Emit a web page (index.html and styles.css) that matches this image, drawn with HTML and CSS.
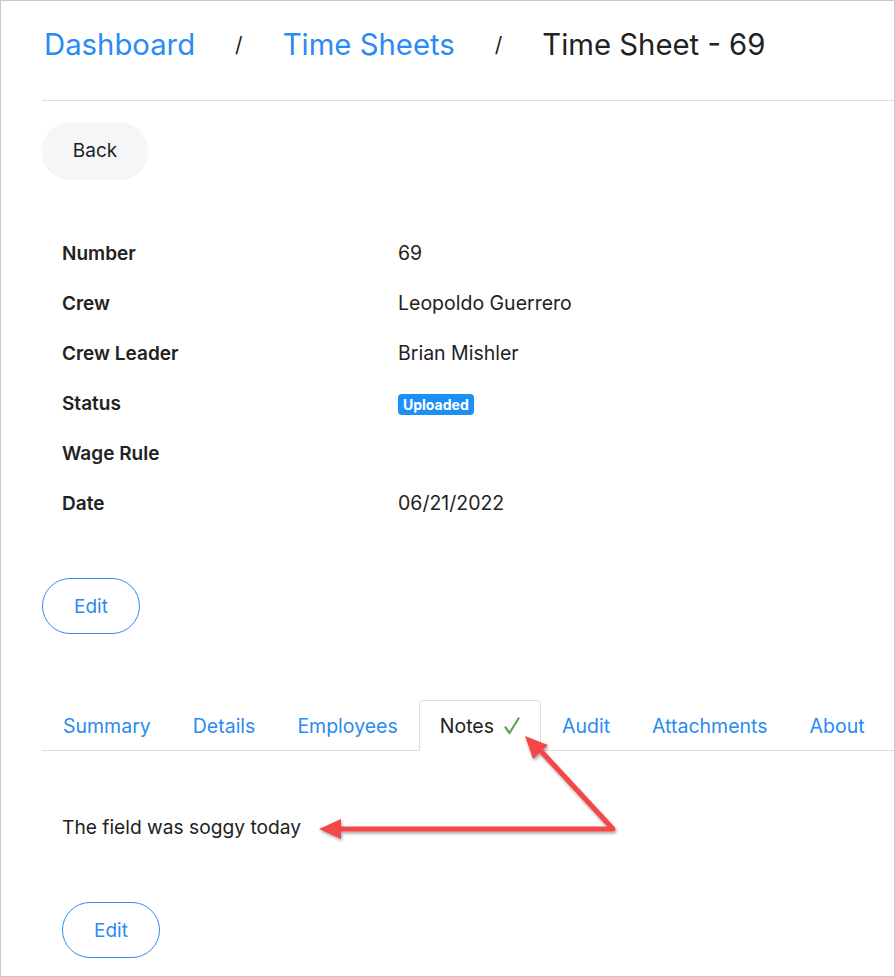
FILE: index.html
```html
<!doctype html>
<html>
<head>
<meta charset="utf-8">
<title>Time Sheet - 69</title>
<link rel="stylesheet" href="styles.css">
</head>
<body>
	<div class="page">
		<div class="crumbs">
			<a href="#">Dashboard</a>
			<span class="sep">/</span>
			<a href="#">Time Sheets</a>
			<span class="sep">/</span>
			<span class="current">Time Sheet - 69</span>
		</div>

		<button class="btn btn-back">Back</button>

		<table class="info">
			<tr><th>Number</th><td>69</td></tr>
			<tr><th>Crew</th><td>Leopoldo Guerrero</td></tr>
			<tr><th>Crew Leader</th><td>Brian Mishler</td></tr>
			<tr><th>Status</th><td><span class="badge">Uploaded</span></td></tr>
			<tr><th>Wage Rule</th><td></td></tr>
			<tr><th>Date</th><td>06/21/2022</td></tr>
		</table>

		<button class="btn btn-outline">Edit</button>

		<ul class="tabs">
			<li><a href="#">Summary</a></li>
			<li><a href="#">Details</a></li>
			<li><a href="#">Employees</a></li>
			<li class="active"><a href="#">Notes <svg class="check" width="16" height="18" viewBox="0 0 16 18"><path d="M1.5 10.5 L5.5 16 L14.5 1.5" fill="none" stroke="#56a84a" stroke-width="2.2" stroke-linecap="round" stroke-linejoin="round"/></svg></a></li>
			<li><a href="#">Audit</a></li>
			<li><a href="#">Attachments</a></li>
			<li><a href="#">About</a></li>
		</ul>

		<div class="tab-body">
			<p class="note">The field was soggy today</p>
			<button class="btn btn-outline">Edit</button>
		</div>

		<!-- annotation arrows -->
		<svg class="marks" width="895" height="977" viewBox="0 0 895 977">
			<defs>
				<filter id="sh" x="-10%" y="-10%" width="120%" height="130%">
					<feDropShadow dx="1" dy="2" stdDeviation="1.5" flood-color="#000" flood-opacity="0.35"/>
				</filter>
			</defs>
			<g filter="url(#sh)" fill="#f44646" stroke="#f44646">
				<polyline points="336,828 612,828 538,748" fill="none" stroke-width="5" stroke-linejoin="round" stroke-linecap="round"/>
				<polygon points="318,828 340,818 340,838" stroke="none"/>
				<polygon points="524,735 547,744 532,758" stroke="none"/>
			</g>
		</svg>
	</div>
</body>
</html>
```

FILE: styles.css
```css
*{
	margin: 0;
	padding: 0;
	box-sizing: border-box;
}
body{
	background: #fff;
	font-family: Inter, "Noto Sans", sans-serif;
	color: #222;
}
a{
	text-decoration: none;
	color: #2a8bf2;
}
.page{
	position: relative;
	height: 977px;
	border: 1px solid #c9c9c9;
	padding-left: 41px;
	overflow: hidden;
}
.crumbs{
	display: flex;
	align-items: center;
	gap: 40px;
	height: 100px;
	padding-left: 2px;
	border-bottom: 1px solid #dedede;
	font-size: 29.3px;
	padding-bottom: 13px;
}
.crumbs .sep{
	font-size: 21px;
	color: #222;
}
.crumbs .current{
	color: #222;
}
.btn{
	display: block;
	font-family: inherit;
	font-size: 19px;
	border-radius: 28px;
	cursor: pointer;
}
.btn-back{
	margin-top: 22px;
	width: 106px;
	height: 55px;
	background: #f5f6f8;
	border: 0;
	color: #222;
	box-shadow: 0 1px 2px rgba(0,0,0,0.08);
}
.btn-outline{
	width: 98px;
	height: 56px;
	background: #fff;
	border: 1px solid #2a8bf2;
	color: #2a8bf2;
}
.info{
	margin-top: 50px;
	border-collapse: collapse;
	font-size: 19.5px;
}
.info th,
.info td{
	height: 50px;
	text-align: left;
	vertical-align: middle;
}
.info th{
	width: 356px;
	padding-left: 20px;
	font-weight: 600;
	font-size: 19px;
}
.info td{
	font-weight: 400;
}
.badge{
	display: inline-block;
	background: #1e8ff7;
	color: #fff;
	font-size: 14px;
	font-weight: 700;
	padding: 2px 5px;
	border-radius: 4px;
	line-height: 17px;
	vertical-align: middle;
}
.info + .btn{
	margin-top: 50px;
}
.tabs{
	display: flex;
	margin-top: 66px;
	border-bottom: 1px solid #dedede;
	list-style: none;
	font-size: 19.5px;
}
.tabs li{
	margin-bottom: -1px;
}
.tabs a{
	display: flex;
	align-items: center;
	gap: 10px;
	height: 51px;
	padding: 0 20px;
	border: 1px solid transparent;
	border-radius: 4px 4px 0 0;
}
.tabs .active a{
	color: #222;
	border-color: #dedede #dedede #fff;
	background: #fff;
}
.check{
	display: block;
}
.tab-body{
	padding: 62px 0 0 20px;
}
.note{
	font-size: 19.2px;
	line-height: 28px;
}
.tab-body .btn{
	margin-top: 61px;
}
.marks{
	position: absolute;
	left: 0;
	top: 0;
	pointer-events: none;
}
```
